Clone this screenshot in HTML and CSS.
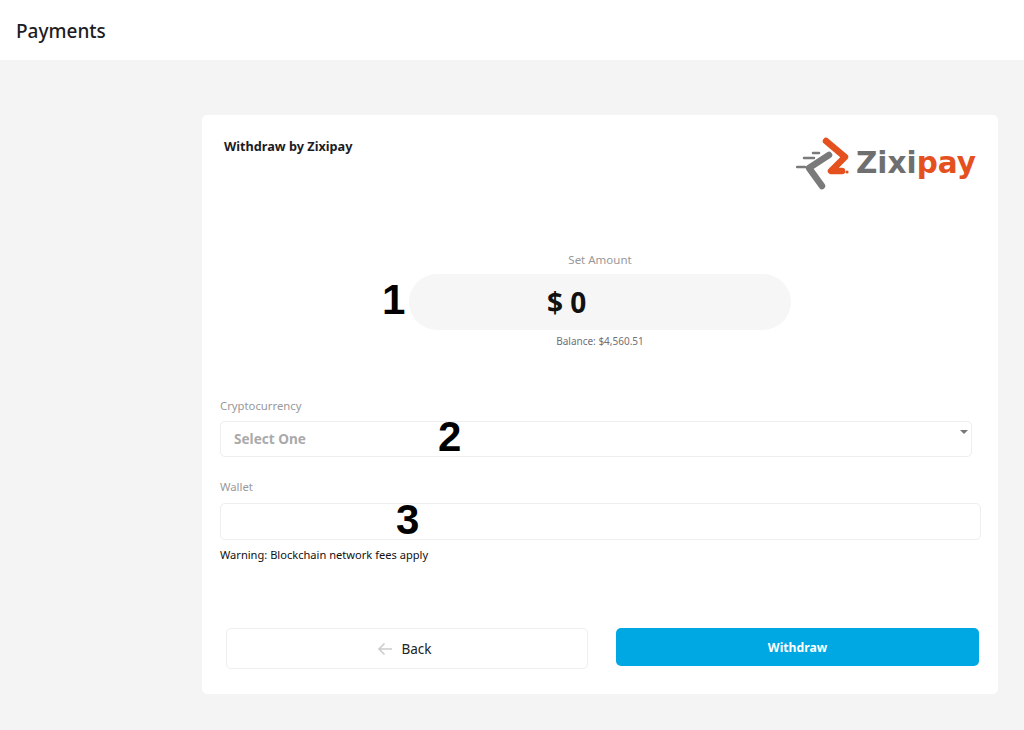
FILE: index.html
```html
<!DOCTYPE html>
<html lang="en">
<head>
    <meta charset="UTF-8">
    <meta name="viewport" content="width=device-width, initial-scale=1.0">
    <title>Payments</title>
    <link rel="stylesheet" href="styles.css">
</head>
<body>
    <header class="topbar">
        <h1>Payments</h1>
    </header>

    <main class="content">
        <section class="card">
            <div class="card-head">
                <h2>Withdraw by Zixipay</h2>
                <div class="logo">
                    <svg class="logo-mark" width="54" height="56" viewBox="0 0 54 56">
                        <g fill="none" stroke-linecap="round" stroke-linejoin="round">
                            <path d="M33 20 L13 33 L26 51" stroke="#7a7a7a" stroke-width="6.5"/>
                            <path d="M30 6 L49 22 L35 36 H46" stroke="#e4511e" stroke-width="6.5"/>
                            <path d="M17 18 H23 M8 23 H18 M1 32 H9" stroke="#7a7a7a" stroke-width="2.5"/>
                        </g>
                        <circle cx="51" cy="37" r="1.6" fill="#e4511e"/>
                    </svg>
                    <span class="logo-text"><span class="logo-grey">Zixi</span>pay</span>
                </div>
            </div>

            <div class="amount">
                <div class="amount-label">Set Amount</div>
                <div class="amount-pill">
                    <span class="marker marker-1">1</span>
                    <span class="amount-value">$ 0</span>
                </div>
                <div class="balance">Balance: $4,560.51</div>
            </div>

            <div class="field">
                <label class="field-label">Cryptocurrency</label>
                <div class="select">
                    <span>Select One</span>
                    <span class="marker marker-2">2</span>
                    <span class="caret"></span>
                </div>
            </div>

            <div class="field field-wallet">
                <label class="field-label" for="wallet">Wallet</label>
                <div class="wallet-wrap">
                    <input type="text" id="wallet" class="wallet">
                    <span class="marker marker-3">3</span>
                </div>
                <p class="warning">Warning: Blockchain network fees apply</p>
            </div>

            <div class="actions">
                <button class="btn-back">
                    <svg width="16" height="14" viewBox="0 0 16 14">
                        <path d="M15 7 H2 M7.5 1.5 L2 7 L7.5 12.5" fill="none" stroke="#ccc" stroke-width="1.6"/>
                    </svg>
                    Back
                </button>
                <button class="btn-withdraw">Withdraw</button>
            </div>
        </section>
    </main>
</body>
</html>
```

FILE: styles.css
```css
* {
    box-sizing: border-box;
}
body {
    font-family: "Noto Sans", Arial, sans-serif;
    margin: 0;
    height: 730px;
    overflow: hidden;
    background-color: #f4f4f4;
    color: #1c1c24;
}
.topbar {
    height: 60px;
    background-color: #fff;
    padding: 0 16px;
    display: flex;
    align-items: center;
}
.topbar h1 {
    margin: 1px 0 0;
    font-size: 19px;
    font-weight: 500;
}
.content {
    padding: 55px 26px 0 202px;
}
.card {
    background-color: #fff;
    border-radius: 5px;
    height: 579px;
    padding: 0 18px;
}

/* titulo e logo */
.card-head {
    height: 119px;
    display: flex;
    justify-content: space-between;
    align-items: flex-start;
}
.card-head h2 {
    margin: 22px 0 0 4px;
    font-size: 12.7px;
    font-weight: 700;
}
.logo {
    display: flex;
    align-items: center;
    gap: 6px;
    margin: 20px 4px 0 0;
}
.logo-text {
    font-family: "DejaVu Sans", sans-serif;
    font-size: 29.5px;
    line-height: 36px;
    font-weight: 700;
    color: #e4511e;
}
.logo-grey {
    color: #6f6f6f;
}

/* valor */
.amount {
    display: flex;
    flex-direction: column;
    align-items: center;
}
.amount-label {
    font-size: 11.5px;
    line-height: 16px;
    color: #999;
    margin: 18px 0 6px;
}
.amount-pill {
    position: relative;
    width: 382px;
    height: 56px;
    border-radius: 28px;
    background-color: #f6f6f6;
    padding-left: 138px;
    display: flex;
    align-items: center;
}
.amount-value {
    font-family: "Open Sans", sans-serif;
    font-size: 28px;
    font-weight: 700;
    color: #111;
}
.balance {
    font-size: 10px;
    line-height: 14px;
    color: #707078;
    margin-top: 4px;
}

/* numeros marcados em cima da tela */
.marker {
    position: absolute;
    font-family: "Liberation Sans", Arial, sans-serif;
    font-size: 42px;
    line-height: 44px;
    font-weight: 700;
    color: #000;
}
.marker-1 {
    left: -27px;
    top: 4px;
}
.marker-2 {
    left: 217px;
    top: -7px;
}
.marker-3 {
    left: 176px;
    top: -5px;
}

/* campos */
.field {
    margin-top: 50px;
    width: 752px;
}
.field-label {
    display: block;
    font-size: 11.3px;
    line-height: 16px;
    color: #999;
    margin-bottom: 7px;
}
.select {
    position: relative;
    height: 36px;
    border: 1px solid #eee;
    border-radius: 5px;
    padding: 0 0 2px 13px;
    display: flex;
    align-items: center;
    font-size: 13.6px;
    font-weight: 700;
    color: #aaa;
}
.caret {
    position: absolute;
    right: 3px;
    top: 8px;
    border-left: 4px solid transparent;
    border-right: 4px solid transparent;
    border-top: 4px solid #777;
}
.field-wallet {
    margin-top: 22px;
    width: 761px;
}
.field-wallet .field-label {
    margin-bottom: 8px;
}
.wallet-wrap {
    position: relative;
}
.wallet {
    display: block;
    width: 100%;
    height: 37px;
    border: 1px solid #eee;
    border-radius: 5px;
    background-color: #fff;
}
.warning {
    margin: 7px 0 0;
    font-size: 11.1px;
    line-height: 16px;
    color: #111;
}

/* botoes */
.actions {
    display: flex;
    align-items: flex-start;
    gap: 28px;
    margin: 65px 0 0 6px;
}
.actions button {
    font-family: "Noto Sans", Arial, sans-serif;
    border-radius: 5px;
    cursor: pointer;
}
.btn-back {
    width: 362px;
    height: 41px;
    padding: 0 5px 0 0;
    background-color: #fff;
    border: 1px solid #eee;
    font-size: 13.5px;
    color: #222;
    display: flex;
    align-items: center;
    justify-content: center;
    gap: 8px;
}
.btn-withdraw {
    width: 363px;
    height: 38px;
    background-color: #00a8e3;
    border: none;
    font-size: 12.2px;
    font-weight: 700;
    color: #fff;
}
```
